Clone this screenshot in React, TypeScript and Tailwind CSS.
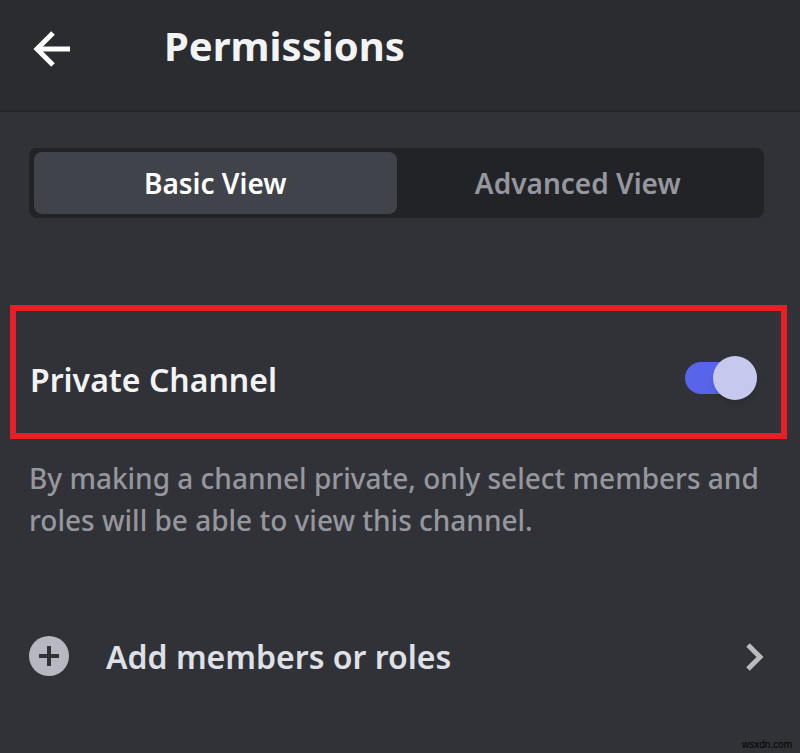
import { useState } from "react";

const VIEWS = ["Basic View", "Advanced View"];

export default function App() {
  const [view, setView] = useState("Basic View");
  const [isPrivate, setIsPrivate] = useState(true);

  return (
    <div className="min-h-screen flex flex-col bg-[#313237] font-['Noto_Sans',sans-serif] text-[#f2f3f5]">
      {/* Header */}
      <header className="flex items-center h-28 pl-8 pb-4 bg-[#2b2c30] border-b border-[#222327]">
        <button type="button" aria-label="Back" className="w-10 shrink-0">
          <svg width="40" height="40" viewBox="0 0 40 40" fill="none" stroke="#ffffff" strokeWidth="5">
            <path d="M38 21H6" />
            <path d="M21 5L5 21l16 16" />
          </svg>
        </button>
        <h1 className="ml-23 pb-1 text-[40px] leading-12 font-bold">Permissions</h1>
      </header>

      <main className="flex flex-col grow pt-9">
        {/* View switch */}
        <div className="flex ml-[29px] mr-9 px-[5px] py-1 rounded-lg bg-[#222327]">
          {VIEWS.map((name) => (
            <button
              key={name}
              type="button"
              aria-pressed={view === name}
              onClick={() => setView(name)}
              className={
                view === name
                  ? "flex-1 h-[62px] rounded-lg bg-[#41434b] text-[28px] font-semibold text-white"
                  : "flex-1 h-[62px] rounded-lg text-[28px] font-semibold text-[#96979e]"
              }
            >
              {name}
            </button>
          ))}
        </div>

        {/* Private channel row */}
        <label
          htmlFor="private-channel"
          className="flex items-center justify-between mt-[87px] ml-[10px] mr-[13px] pl-[14px] pr-6 pt-10 pb-7 border-6 border-[#e91f26]"
        >
          <span className="pt-1 text-[32px] leading-[50px] font-semibold">Private Channel</span>
          <span className="relative flex items-center w-18 h-12">
            <input
              id="private-channel"
              type="checkbox"
              role="switch"
              checked={isPrivate}
              onChange={(e) => setIsPrivate(e.target.checked)}
              className="peer appearance-none w-full h-8 rounded-full bg-[#72767d] checked:bg-[#5865ea]"
            />
            <span className="absolute left-0 w-11 h-11 rounded-full bg-[#c7c8ee] shadow-md peer-checked:left-7" />
          </span>
        </label>

        <p className="mt-[18px] ml-[29px] mr-8 text-[28px] leading-[42px] font-medium text-[#96979e]">
          By making a channel private, only select members and roles will be able to view this channel.
        </p>

        {/* Add members */}
        <button type="button" className="flex items-center mt-[68px] ml-7 mr-9 h-24 text-left">
          <svg width="42" height="42" viewBox="0 0 42 42" className="shrink-0">
            <circle cx="21" cy="20" r="20" fill="#b5b9bf" />
            <path d="M21 10v20M11 20h20" stroke="#313237" strokeWidth="4" />
          </svg>
          <span className="ml-9 grow text-[32px] leading-10 font-semibold text-[#dfe0e6]">Add members or roles</span>
          <svg width="18" height="30" viewBox="0 0 18 30" fill="none" stroke="#b9bbbf" strokeWidth="5" className="shrink-0">
            <path d="M2 3l12 12L2 27" />
          </svg>
        </button>
        <small className="mt-auto mr-2 self-end font-['Liberation_Sans',sans-serif] text-[10px] leading-4 text-black">
          wsxdn.com
        </small>
      </main>
    </div>
  );
}
